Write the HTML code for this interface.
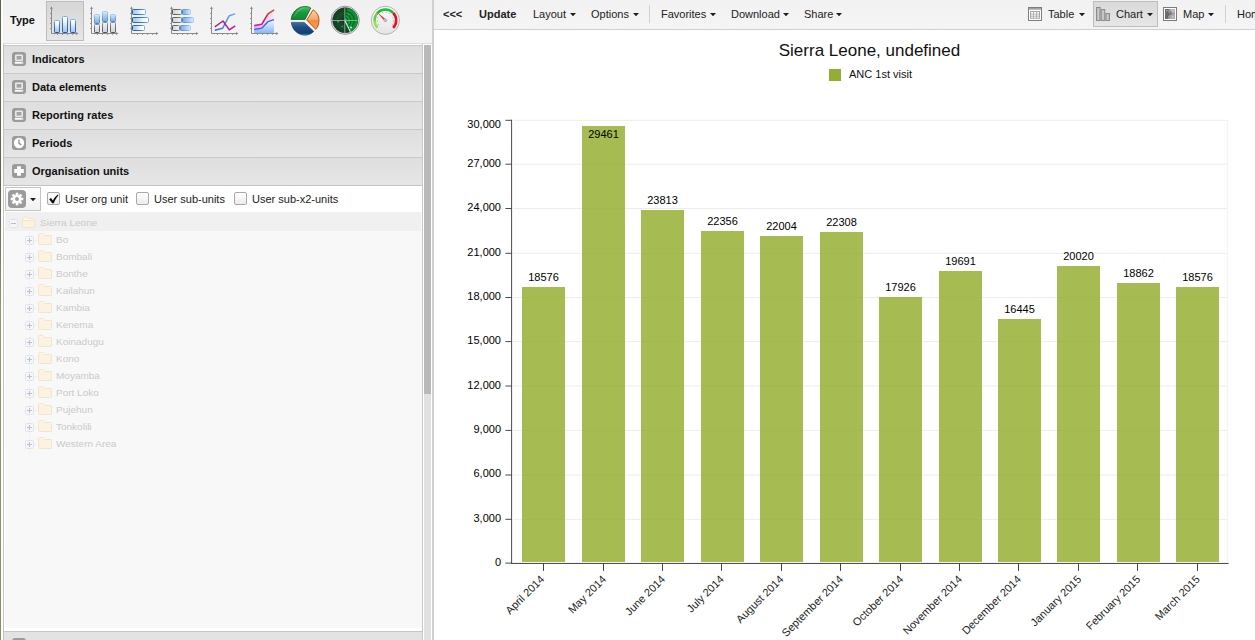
<!DOCTYPE html>
<html>
<head>
<meta charset="utf-8">
<title>DHIS 2 Data Visualizer</title>
<style>
html,body{margin:0;padding:0;}
body{width:1255px;height:640px;overflow:hidden;background:#fff;position:relative;font-family:"Liberation Sans",sans-serif;font-size:11px;color:#222;}
.abs{position:absolute;}
.t{position:absolute;white-space:nowrap;line-height:13px;font-size:11px;color:#222;}
.b{font-weight:bold;}
#edge{left:0;top:0;width:1px;height:640px;background:linear-gradient(#5e604c 0%,#626450 32%,#a09268 48%,#94885e 100%);}
#west{left:1px;top:0;width:431px;height:640px;background:#fff;}
#typebar{left:3px;top:0;width:429px;height:43px;background:linear-gradient(#f0f0f0,#f4f4f4);border-bottom:1px solid #dcdcdc;}
.tbtn{position:absolute;top:1px;width:36px;height:37.5px;border:1px solid transparent;}
.tbtn.sel{border-color:#bdbdbd;background:linear-gradient(#d6d6d6,#e6e6e6);}
.tbtn svg{position:absolute;left:2px;top:2px;}
#split{left:432px;top:0;width:2px;height:640px;background:#d0d0d0;}
#acc{left:3px;top:44px;width:420px;height:596px;background:#fff;border-left:1px solid #c4c4c4;border-right:1px solid #c9c9c9;box-sizing:border-box;}
.hd{position:absolute;left:4px;width:418px;height:27px;border-top:1px solid #c8c8c8;background:linear-gradient(#dedede,#e6e6e6);}
.hd svg{position:absolute;left:8px;top:6px;}
.hd .tx{position:absolute;left:28px;top:7px;font-weight:bold;font-size:11px;line-height:13px;color:#111;white-space:nowrap;}
#sb{left:424px;top:45px;width:7px;height:595px;background:#e1e1e1;}
#sbt{left:424px;top:45px;width:7px;height:349px;background:#b9b9b9;}
#orgbar{left:4px;top:186px;width:418px;height:26px;background:#fff;}
.cb{position:absolute;top:192px;width:11px;height:11px;border:1px solid #a9a9a9;border-radius:2px;background:linear-gradient(#fff,#ececec);}
.lb{position:absolute;font-size:10px;line-height:13px;color:#cacaca;white-space:nowrap;transform:scaleY(0.92);transform-origin:0 76%;}
#ebar{left:434px;top:0;width:821px;height:29px;background:linear-gradient(#f2f2f2,#f4f4f4);border-bottom:1px solid #d0d0d0;}
.arr{position:absolute;width:6px;height:3.4px;background:#1e1e1e;clip-path:polygon(0 0,100% 0,50% 100%);margin-top:-0.1px;}
.sep{position:absolute;width:1px;background:#d2d2d2;}
.bar{position:absolute;width:43px;background:rgba(144,170,39,0.8);}
.vl{position:absolute;font-size:11px;line-height:13px;width:43px;text-align:center;color:#000;}
.yl{position:absolute;font-size:11px;line-height:13px;width:60px;text-align:right;color:#000;left:441px;}
.gl{position:absolute;left:512px;width:716px;height:1px;background:#ececec;}
.tk{position:absolute;background:#444;}
.xl{position:absolute;font-size:11px;line-height:13px;white-space:nowrap;color:#222;transform-origin:100% 50%;transform:rotate(-45deg);text-align:right;}
</style>
</head>
<body>
<div class="abs" id="west"></div>
<div class="abs" id="edge"></div>
<div class="abs" id="typebar"></div>
<div class="t b" style="left:10px;top:14px;color:#111;">Type</div>
<svg width="0" height="0" style="position:absolute"><defs>
<linearGradient id="gb" x1="0" y1="0" x2="0" y2="1"><stop offset="0" stop-color="#ffffff"/><stop offset="0.3" stop-color="#f4f8fd"/><stop offset="0.65" stop-color="#c4daf2"/><stop offset="1" stop-color="#a4c4ea"/></linearGradient>
<linearGradient id="sb1" x1="0" y1="0" x2="0" y2="1"><stop offset="0" stop-color="#7fb2ec"/><stop offset="0.35" stop-color="#3f80cc"/><stop offset="1" stop-color="#1a56a2"/></linearGradient>
<linearGradient id="gbh" x1="0" y1="0" x2="1" y2="0"><stop offset="0" stop-color="#a4c4ea"/><stop offset="0.35" stop-color="#c4daf2"/><stop offset="0.7" stop-color="#f4f8fd"/><stop offset="1" stop-color="#ffffff"/></linearGradient>
<linearGradient id="sb1h" x1="0" y1="0" x2="1" y2="0"><stop offset="0" stop-color="#1a56a2"/><stop offset="0.65" stop-color="#3f80cc"/><stop offset="1" stop-color="#7fb2ec"/></linearGradient>
<linearGradient id="gb2" x1="0" y1="0" x2="0" y2="1"><stop offset="0" stop-color="#dbe8f8"/><stop offset="1" stop-color="#78aae6"/></linearGradient>
<linearGradient id="sb2" x1="0" y1="0" x2="0" y2="1"><stop offset="0" stop-color="#a4cdf8"/><stop offset="1" stop-color="#4486d6"/></linearGradient>
<linearGradient id="gb2h" x1="0" y1="0" x2="1" y2="0"><stop offset="0" stop-color="#78aae6"/><stop offset="1" stop-color="#dbe8f8"/></linearGradient>
<linearGradient id="sb2h" x1="0" y1="0" x2="1" y2="0"><stop offset="0" stop-color="#4486d6"/><stop offset="1" stop-color="#a4cdf8"/></linearGradient>
<linearGradient id="gg" x1="0" y1="0" x2="0" y2="1"><stop offset="0" stop-color="#f2f2f2"/><stop offset="1" stop-color="#d2d2d2"/></linearGradient>
<linearGradient id="sg" x1="0" y1="0" x2="0" y2="1"><stop offset="0" stop-color="#8a9096"/><stop offset="1" stop-color="#46525c"/></linearGradient>
<linearGradient id="ggh" x1="0" y1="0" x2="1" y2="0"><stop offset="0" stop-color="#d2d2d2"/><stop offset="1" stop-color="#f2f2f2"/></linearGradient>
<linearGradient id="sgh" x1="0" y1="0" x2="1" y2="0"><stop offset="0" stop-color="#46525c"/><stop offset="1" stop-color="#7a828a"/></linearGradient>
<linearGradient id="lb" x1="0" y1="0" x2="1" y2="0"><stop offset="0" stop-color="#2468e0"/><stop offset="1" stop-color="#74b6ff"/></linearGradient>
<linearGradient id="lm" x1="0" y1="0" x2="1" y2="0"><stop offset="0" stop-color="#c02068"/><stop offset="1" stop-color="#b0209a"/></linearGradient>
<linearGradient id="am" x1="0" y1="0" x2="1" y2="0"><stop offset="0" stop-color="#d820c0"/><stop offset="0.5" stop-color="#c02268"/><stop offset="1" stop-color="#c85a20"/></linearGradient>
<linearGradient id="ap" x1="0" y1="0" x2="1" y2="0"><stop offset="0" stop-color="#fba6ee"/><stop offset="1" stop-color="#fde6ee"/></linearGradient>
<linearGradient id="ab" x1="0" y1="0" x2="0" y2="1"><stop offset="0" stop-color="#f4f8ff"/><stop offset="1" stop-color="#86b8fa"/></linearGradient>
<linearGradient id="pg" x1="0" y1="0" x2="0" y2="1"><stop offset="0" stop-color="#4cc06a"/><stop offset="0.45" stop-color="#189a3c"/><stop offset="1" stop-color="#0c8a30"/></linearGradient>
<linearGradient id="po" x1="0" y1="0" x2="0" y2="1"><stop offset="0" stop-color="#fbd2b0"/><stop offset="0.5" stop-color="#f6a468"/><stop offset="0.52" stop-color="#f08a3c"/><stop offset="1" stop-color="#f6a24a"/></linearGradient>
<linearGradient id="pb" x1="0" y1="0" x2="0" y2="1"><stop offset="0" stop-color="#4a6c98"/><stop offset="0.4" stop-color="#1f4c82"/><stop offset="0.85" stop-color="#12406e"/><stop offset="1" stop-color="#2fb4d8"/></linearGradient>
<radialGradient id="rg" cx="0.5" cy="0.5" r="0.5"><stop offset="0" stop-color="#0a2a16"/><stop offset="0.55" stop-color="#1f4e30"/><stop offset="1" stop-color="#16381f"/></radialGradient>
<radialGradient id="rw" cx="0" cy="0" r="13" gradientUnits="userSpaceOnUse"><stop offset="0" stop-color="#0fa83c"/><stop offset="1" stop-color="#0a9a30"/></radialGradient>
<linearGradient id="gau" x1="0" y1="0" x2="0" y2="1"><stop offset="0" stop-color="#fdfdfd"/><stop offset="1" stop-color="#e4e4e4"/></linearGradient>
</defs></svg>
<div class="tbtn sel" style="left:46px"><svg width="32" height="32" viewBox="0 0 32 32"><path d="M2.5 3 V29.5 H28.5" fill="none" stroke="#8a8a8a" stroke-width="1"/><path d="M1.1 4.9 L2.5 2.3 L3.9 4.9 Z M26.9 28.1 L29.6 29.5 L26.9 30.9 Z" fill="#8a8a8a"/><path d="M1.2 9.5H2.5 M1.2 14.5H2.5 M1.2 19.5H2.5 M1.2 24.5H2.5 M8.5 29.5V30.8 M13.5 29.5V30.8 M18.5 29.5V30.8 M23.5 29.5V30.8" stroke="#8a8a8a" stroke-width="1"/><rect x="5.5" y="16.5" width="5" height="12" rx="0.8" fill="url(#gb)" stroke="url(#sb1)" stroke-width="1"/><rect x="13.5" y="12.5" width="5" height="16" rx="0.8" fill="url(#gb)" stroke="url(#sb1)" stroke-width="1"/><rect x="21.5" y="15.5" width="5" height="13" rx="0.8" fill="url(#gb)" stroke="url(#sb1)" stroke-width="1"/></svg></div>
<div class="tbtn" style="left:86px"><svg width="32" height="32" viewBox="0 0 32 32"><path d="M2.5 3 V29.5 H28.5" fill="none" stroke="#8a8a8a" stroke-width="1"/><path d="M1.1 4.9 L2.5 2.3 L3.9 4.9 Z M26.9 28.1 L29.6 29.5 L26.9 30.9 Z" fill="#8a8a8a"/><path d="M1.2 9.5H2.5 M1.2 14.5H2.5 M1.2 19.5H2.5 M1.2 24.5H2.5 M8.5 29.5V30.8 M13.5 29.5V30.8 M18.5 29.5V30.8 M23.5 29.5V30.8" stroke="#8a8a8a" stroke-width="1"/><rect x="5.5" y="20.5" width="5" height="8" rx="0.8" fill="url(#gg)" stroke="url(#sg)" stroke-width="1"/><rect x="5.5" y="10.5" width="5" height="9" rx="0.8" fill="url(#gb2)" stroke="url(#sb2)" stroke-width="1"/><rect x="13.5" y="18.5" width="5" height="10" rx="0.8" fill="url(#gg)" stroke="url(#sg)" stroke-width="1"/><rect x="13.5" y="7.5" width="5" height="10" rx="0.8" fill="url(#gb2)" stroke="url(#sb2)" stroke-width="1"/><rect x="21.5" y="18.5" width="5" height="10" rx="0.8" fill="url(#gg)" stroke="url(#sg)" stroke-width="1"/><rect x="21.5" y="10.5" width="5" height="7" rx="0.8" fill="url(#gb2)" stroke="url(#sb2)" stroke-width="1"/></svg></div>
<div class="tbtn" style="left:126px"><svg width="32" height="32" viewBox="0 0 32 32"><path d="M2.5 3 V29.5 H28.5" fill="none" stroke="#8a8a8a" stroke-width="1"/><path d="M1.1 4.9 L2.5 2.3 L3.9 4.9 Z M26.9 28.1 L29.6 29.5 L26.9 30.9 Z" fill="#8a8a8a"/><path d="M1.2 9.5H2.5 M1.2 14.5H2.5 M1.2 19.5H2.5 M1.2 24.5H2.5 M8.5 29.5V30.8 M13.5 29.5V30.8 M18.5 29.5V30.8 M23.5 29.5V30.8" stroke="#8a8a8a" stroke-width="1"/><rect x="3.5" y="5.5" width="13" height="5" rx="0.8" fill="url(#gbh)" stroke="url(#sb1h)" stroke-width="1"/><rect x="3.5" y="13.5" width="16" height="5" rx="0.8" fill="url(#gbh)" stroke="url(#sb1h)" stroke-width="1"/><rect x="3.5" y="21.5" width="12" height="5" rx="0.8" fill="url(#gbh)" stroke="url(#sb1h)" stroke-width="1"/></svg></div>
<div class="tbtn" style="left:166px"><svg width="32" height="32" viewBox="0 0 32 32"><path d="M2.5 3 V29.5 H28.5" fill="none" stroke="#8a8a8a" stroke-width="1"/><path d="M1.1 4.9 L2.5 2.3 L3.9 4.9 Z M26.9 28.1 L29.6 29.5 L26.9 30.9 Z" fill="#8a8a8a"/><path d="M1.2 9.5H2.5 M1.2 14.5H2.5 M1.2 19.5H2.5 M1.2 24.5H2.5 M8.5 29.5V30.8 M13.5 29.5V30.8 M18.5 29.5V30.8 M23.5 29.5V30.8" stroke="#8a8a8a" stroke-width="1"/><rect x="3.5" y="5.5" width="9" height="5" rx="0.8" fill="url(#ggh)" stroke="url(#sgh)" stroke-width="1"/><rect x="13.5" y="5.5" width="8" height="5" rx="0.8" fill="url(#gb2h)" stroke="url(#sb2h)" stroke-width="1"/><rect x="3.5" y="13.5" width="9" height="5" rx="0.8" fill="url(#ggh)" stroke="url(#sgh)" stroke-width="1"/><rect x="13.5" y="13.5" width="11" height="5" rx="0.8" fill="url(#gb2h)" stroke="url(#sb2h)" stroke-width="1"/><rect x="3.5" y="21.5" width="7" height="5" rx="0.8" fill="url(#ggh)" stroke="url(#sgh)" stroke-width="1"/><rect x="11.5" y="21.5" width="10" height="5" rx="0.8" fill="url(#gb2h)" stroke="url(#sb2h)" stroke-width="1"/></svg></div>
<div class="tbtn" style="left:206px"><svg width="32" height="32" viewBox="0 0 32 32"><path d="M2.5 3 V29.5 H28.5" fill="none" stroke="#8a8a8a" stroke-width="1"/><path d="M1.1 4.9 L2.5 2.3 L3.9 4.9 Z M26.9 28.1 L29.6 29.5 L26.9 30.9 Z" fill="#8a8a8a"/><path d="M1.2 9.5H2.5 M1.2 14.5H2.5 M1.2 19.5H2.5 M1.2 24.5H2.5 M8.5 29.5V30.8 M13.5 29.5V30.8 M18.5 29.5V30.8 M23.5 29.5V30.8" stroke="#8a8a8a" stroke-width="1"/><path d="M5.8 26.2 L13.7 24.2 L20.3 11.7 L26.2 9.8" fill="none" stroke="url(#lb)" stroke-width="1.5" stroke-linejoin="round"/><path d="M5.8 22.9 L14 17 L20.3 25.9 L26.2 21.9" fill="none" stroke="url(#lm)" stroke-width="1.5" stroke-linejoin="round"/></svg></div>
<div class="tbtn" style="left:246px"><svg width="32" height="32" viewBox="0 0 32 32"><path d="M5.2 25.5 L12.7 24.2 L19 17.7 L25 15.7 V29 H5.2 Z" fill="url(#ab)"/><path d="M5.2 21.6 L12.7 20.3 L19 9.8 L25 5.9 V15.7 L19 17.7 L12.7 24.2 L5.2 25.5 Z" fill="url(#ap)"/><path d="M5.2 25.5 L12.7 24.2 L19 17.7 L25 15.7" fill="none" stroke="#2a6ae0" stroke-width="1.3" stroke-linejoin="round"/><path d="M5.2 21.6 L12.7 20.3 L19 9.8 L25.2 5.8" fill="none" stroke="url(#am)" stroke-width="1.6" stroke-linejoin="round"/><path d="M2.5 3 V29.5 H28.5" fill="none" stroke="#8a8a8a" stroke-width="1"/><path d="M1.1 4.9 L2.5 2.3 L3.9 4.9 Z M26.9 28.1 L29.6 29.5 L26.9 30.9 Z" fill="#8a8a8a"/><path d="M1.2 9.5H2.5 M1.2 14.5H2.5 M1.2 19.5H2.5 M1.2 24.5H2.5 M8.5 29.5V30.8 M13.5 29.5V30.8 M18.5 29.5V30.8 M23.5 29.5V30.8" stroke="#8a8a8a" stroke-width="1"/></svg></div>
<div class="tbtn" style="left:286px"><svg width="32" height="32" viewBox="0 0 32 32"><path d="M2.2 15.5 C2.6 8.4 9 2.4 16 2.5 C18.5 2.5 20.6 3.1 21.8 4 L16 15.5 Z" fill="url(#pg)" stroke="#0a6424" stroke-width="0.8" stroke-linejoin="round"/><path d="M17.7 16 L24.2 5.8 C27.8 8 30 12 30 16 C30 20 28.8 23.4 26.7 25.3 Z" fill="url(#po)" stroke="#b84412" stroke-width="0.9" stroke-linejoin="round"/><path d="M2.3 18.4 H15.3 L24.8 27.4 C22 30 19 31.2 16 31.2 C8.6 31.2 3 25.4 2.3 18.4 Z" fill="url(#pb)" stroke="#123a66" stroke-width="0.6" stroke-linejoin="round"/><path d="M4.6 13.5 C6 8 10.6 3.6 16.4 3.2 C12 5 8 8.6 4.6 13.5 Z" fill="#fff" opacity="0.18"/></svg></div>
<div class="tbtn" style="left:326px"><svg width="32" height="32" viewBox="0 0 32 32"><circle cx="16.2" cy="16.3" r="14.1" fill="#fbfbfb" stroke="#8a8a8a" stroke-width="0.9"/><circle cx="16.2" cy="16.3" r="12.7" fill="url(#rg)" stroke="#3a4a3e" stroke-width="0.5"/><g transform="translate(15.8 16.5)"><path d="M0 0 L2.2 -12.6 A12.6 12.6 0 0 1 5.6 11.3 Z" fill="url(#rw)" opacity="0.9"/><circle r="9.4" fill="none" stroke="#0a4a20" stroke-width="1.1" opacity="0.75"/><circle r="6.3" fill="none" stroke="#0a4a20" stroke-width="1.1" opacity="0.75"/><circle r="3.3" fill="none" stroke="#0a4a20" stroke-width="1" opacity="0.75"/><path d="M0 -12.6V12.6M-12.6 0H12.6" stroke="#8fc89e" stroke-width="0.8"/><path d="M0 0 L5.6 11.2" stroke="#d8f4e0" stroke-width="1.1"/><circle r="0.9" fill="#f070e0"/><circle cx="6.2" cy="7" r="0.9" fill="#e8fff0"/><circle cx="-6.6" cy="1.2" r="0.6" fill="#8ae8e0"/><circle cx="-2.6" cy="5.8" r="0.6" fill="#5ad0c8"/><circle cx="4" cy="-6" r="0.6" fill="#5ad0a0"/></g></svg></div>
<div class="tbtn" style="left:366px"><svg width="32" height="32" viewBox="0 0 32 32"><circle cx="16.4" cy="16.35" r="14.1" fill="url(#gau)" stroke="#b4b4b4" stroke-width="1"/><path d="M8.50 23.72 A10.8 10.8 0 0 1 5.60 16.35" fill="none" stroke="#9be048" stroke-width="2.6"/><path d="M5.61 16.73 A10.8 10.8 0 0 1 8.90 8.58" fill="none" stroke="#5ad244" stroke-width="2.6"/><path d="M8.63 8.85 A10.8 10.8 0 0 1 24.17 8.85" fill="none" stroke="#14c236" stroke-width="2.6"/><path d="M24.17 8.85 A10.8 10.8 0 0 1 24.17 23.85" fill="none" stroke="#e4101e" stroke-width="2.6"/><path d="M9.99 20.05L8.95 20.65" stroke="#a8a8a8" stroke-width="0.9"/><path d="M9.03 16.99L7.83 17.10" stroke="#a8a8a8" stroke-width="0.9"/><path d="M9.45 13.82L8.32 13.41" stroke="#a8a8a8" stroke-width="0.9"/><path d="M13.87 9.40L13.46 8.27" stroke="#a8a8a8" stroke-width="0.9"/><path d="M17.04 8.98L17.15 7.78" stroke="#a8a8a8" stroke-width="0.9"/><path d="M20.10 9.94L20.70 8.90" stroke="#a8a8a8" stroke-width="0.9"/><path d="M23.35 13.82L24.48 13.41" stroke="#a8a8a8" stroke-width="0.9"/><path d="M23.77 16.99L24.97 17.10" stroke="#a8a8a8" stroke-width="0.9"/><path d="M22.81 20.05L23.85 20.65" stroke="#a8a8a8" stroke-width="0.9"/><path d="M7 7.2 L17 15.6 L15.6 17 Z" fill="#f23046"/><circle cx="16.4" cy="16.4" r="1.7" fill="#a4a4a4" stroke="#d0d0d0" stroke-width="0.6"/><circle cx="16.4" cy="16.4" r="0.7" fill="#d8d8d8"/></svg></div>
<div class="abs" id="acc"></div>
<div class="hd" style="top:45px"><svg width="14" height="14" viewBox="0 0 14 14"><rect width="14" height="14" rx="3" fill="#9b9b9b"/><rect x="3" y="2.6" width="8" height="6.4" rx="1" fill="#e9e9e9"/><rect x="4.6" y="4" width="4.8" height="3.6" fill="#a3a3a3"/><rect x="2.8" y="9.8" width="8.4" height="1.9" fill="#fff"/><rect x="9.5" y="10.3" width="1" height="0.9" fill="#a8a8a8"/></svg><div class="tx">Indicators</div></div>
<div class="hd" style="top:73px"><svg width="14" height="14" viewBox="0 0 14 14"><rect width="14" height="14" rx="3" fill="#9b9b9b"/><rect x="3" y="2.6" width="8" height="6.4" rx="1" fill="#e9e9e9"/><rect x="4.6" y="4" width="4.8" height="3.6" fill="#a3a3a3"/><rect x="2.8" y="9.8" width="8.4" height="1.9" fill="#fff"/><rect x="9.5" y="10.3" width="1" height="0.9" fill="#a8a8a8"/></svg><div class="tx">Data elements</div></div>
<div class="hd" style="top:101px"><svg width="14" height="14" viewBox="0 0 14 14"><rect width="14" height="14" rx="3" fill="#9b9b9b"/><rect x="3" y="2.6" width="8" height="6.4" rx="1" fill="#e9e9e9"/><rect x="4.6" y="4" width="4.8" height="3.6" fill="#a3a3a3"/><rect x="2.8" y="9.8" width="8.4" height="1.9" fill="#fff"/><rect x="9.5" y="10.3" width="1" height="0.9" fill="#a8a8a8"/></svg><div class="tx">Reporting rates</div></div>
<div class="hd" style="top:129px"><svg width="14" height="14" viewBox="0 0 14 14"><rect width="14" height="14" rx="3" fill="#9b9b9b"/><circle cx="7" cy="7" r="5.2" fill="#fff"/><path d="M7 3.4V7.3L9.3 8.9" fill="none" stroke="#909090" stroke-width="1.3"/></svg><div class="tx">Periods</div></div>
<div class="hd" style="top:157px"><svg width="14" height="14" viewBox="0 0 14 14"><rect width="14" height="14" rx="3" fill="#9b9b9b"/><path d="M5.1 2.2H8.9V5.1H11.8V8.9H8.9V11.8H5.1V8.9H2.2V5.1H5.1Z" fill="#fff"/></svg><div class="tx">Organisation units</div></div>
<div class="abs" style="left:4px;top:185px;width:418px;height:1px;background:#c3c3c3"></div>
<div class="abs" id="orgbar"></div>
<div class="abs" style="left:5px;top:187px;width:36px;height:24px;box-sizing:border-box;border:1px solid #c4c4c4;background:linear-gradient(#fcfcfc,#f2f2f2)"></div>
<div class="abs" style="left:8px;top:190px;width:18px;height:18px"><svg width="18" height="18" viewBox="0 0 18 18"><rect width="18" height="18" rx="4" fill="#9b9b9b"/><g transform="translate(9 9)" fill="#fff"><rect x="-1.3" y="-6.3" width="2.6" height="4" transform="rotate(0)"/><rect x="-1.3" y="-6.3" width="2.6" height="4" transform="rotate(45)"/><rect x="-1.3" y="-6.3" width="2.6" height="4" transform="rotate(90)"/><rect x="-1.3" y="-6.3" width="2.6" height="4" transform="rotate(135)"/><rect x="-1.3" y="-6.3" width="2.6" height="4" transform="rotate(180)"/><rect x="-1.3" y="-6.3" width="2.6" height="4" transform="rotate(225)"/><rect x="-1.3" y="-6.3" width="2.6" height="4" transform="rotate(270)"/><rect x="-1.3" y="-6.3" width="2.6" height="4" transform="rotate(315)"/><circle r="4.4"/><circle r="1.9" fill="#9b9b9b"/></g></svg></div>
<div class="arr" style="left:30px;top:198px"></div>
<div class="cb" style="left:47px"></div>
<svg class="abs" style="left:47px;top:192px" width="14" height="14" viewBox="0 0 14 14"><path d="M2.2 7.2 L3.9 5.9 L5.9 8.4 C7 6.2 8.6 4.2 10.8 2.4 L11.5 3.2 C9.4 5.6 7.9 8.2 6.8 11.2 L5.2 11.2 Z" fill="#0a0a0a"/></svg>
<div class="t" style="left:65px;top:193px">User org unit</div>
<div class="cb" style="left:136px"></div>
<div class="t" style="left:154px;top:193px">User sub-units</div>
<div class="cb" style="left:234px"></div>
<div class="t" style="left:252px;top:193px">User sub-x2-units</div>
<div class="abs" style="left:5px;top:212px;width:417px;height:416px;background:#f8f8f8"></div>
<div class="abs" style="left:5px;top:212px;width:416px;height:19px;background:#f0f0f0"></div>
<svg class="abs" style="left:9px;top:219px" width="9" height="9" viewBox="0 0 9 9"><rect x="0.5" y="0.5" width="8" height="8" rx="1" fill="#f5f6f9" stroke="#e0e4ea"/><path d="M2 4.5H7" stroke="#b9c1cd" stroke-width="1"/></svg>
<svg class="abs" style="left:21px;top:215px" width="16" height="14" viewBox="0 0 16 14"><path d="M2 11.5 V3 Q2 2 3 2 H6 L7.4 3.5 H13 Q14 3.5 14 4.5 V11.5 Z" fill="#fdf6e6" stroke="#f2e5c9" stroke-width="1"/><path d="M1 6.6 Q0.9 5.6 1.9 5.6 H12.4 Q13.4 5.6 13.5 6.6 L14 11.6 Q14.1 12.6 13.1 12.6 H2.4 Q1.4 12.6 1.4 11.6 Z" fill="#fcf2e0" stroke="#f2e5c9" stroke-width="1"/></svg>
<div class="lb" style="left:40px;top:216px">Sierra Leone</div>
<svg class="abs" style="left:0;top:0" width="60" height="460" viewBox="0 0 60 460"><path d="M29.5 232V236 M13.5 215V219" stroke="#e6e6e6" stroke-width="1" stroke-dasharray="1 2"/><path d="M29.5 245.5V253" stroke="#e8e8e8" stroke-width="1" stroke-dasharray="1 2"/><path d="M35 240.5H36" stroke="#e8e8e8" stroke-width="1"/><path d="M29.5 262.5V270" stroke="#e8e8e8" stroke-width="1" stroke-dasharray="1 2"/><path d="M35 257.5H36" stroke="#e8e8e8" stroke-width="1"/><path d="M29.5 279.5V287" stroke="#e8e8e8" stroke-width="1" stroke-dasharray="1 2"/><path d="M35 274.5H36" stroke="#e8e8e8" stroke-width="1"/><path d="M29.5 296.5V304" stroke="#e8e8e8" stroke-width="1" stroke-dasharray="1 2"/><path d="M35 291.5H36" stroke="#e8e8e8" stroke-width="1"/><path d="M29.5 313.5V321" stroke="#e8e8e8" stroke-width="1" stroke-dasharray="1 2"/><path d="M35 308.5H36" stroke="#e8e8e8" stroke-width="1"/><path d="M29.5 330.5V338" stroke="#e8e8e8" stroke-width="1" stroke-dasharray="1 2"/><path d="M35 325.5H36" stroke="#e8e8e8" stroke-width="1"/><path d="M29.5 347.5V355" stroke="#e8e8e8" stroke-width="1" stroke-dasharray="1 2"/><path d="M35 342.5H36" stroke="#e8e8e8" stroke-width="1"/><path d="M29.5 364.5V372" stroke="#e8e8e8" stroke-width="1" stroke-dasharray="1 2"/><path d="M35 359.5H36" stroke="#e8e8e8" stroke-width="1"/><path d="M29.5 381.5V389" stroke="#e8e8e8" stroke-width="1" stroke-dasharray="1 2"/><path d="M35 376.5H36" stroke="#e8e8e8" stroke-width="1"/><path d="M29.5 398.5V406" stroke="#e8e8e8" stroke-width="1" stroke-dasharray="1 2"/><path d="M35 393.5H36" stroke="#e8e8e8" stroke-width="1"/><path d="M29.5 415.5V423" stroke="#e8e8e8" stroke-width="1" stroke-dasharray="1 2"/><path d="M35 410.5H36" stroke="#e8e8e8" stroke-width="1"/><path d="M29.5 432.5V440" stroke="#e8e8e8" stroke-width="1" stroke-dasharray="1 2"/><path d="M35 427.5H36" stroke="#e8e8e8" stroke-width="1"/><path d="M29.5 449.5V457" stroke="#e8e8e8" stroke-width="1" stroke-dasharray="1 2"/><path d="M35 444.5H36" stroke="#e8e8e8" stroke-width="1"/></svg>
<svg class="abs" style="left:25px;top:236px" width="9" height="9" viewBox="0 0 9 9"><rect x="0.5" y="0.5" width="8" height="8" rx="1" fill="#f5f6f9" stroke="#e0e4ea"/><path d="M2 4.5H7" stroke="#b9c1cd" stroke-width="1"/><path d="M4.5 2V7" stroke="#b9c1cd" stroke-width="1"/></svg>
<svg class="abs" style="left:37px;top:232px" width="16" height="14" viewBox="0 0 16 14"><path d="M1.5 2.5 Q1.5 1.5 2.5 1.5 H6 L7.5 3.5 H13.5 Q14.5 3.5 14.5 4.5 V11.5 Q14.5 12.5 13.5 12.5 H2.5 Q1.5 12.5 1.5 11.5 Z" fill="#fcf2e0" stroke="#f2e5c9" stroke-width="1"/><path d="M2.8 2.9H5.6" stroke="#fffaf0" stroke-width="0.9"/></svg>
<div class="lb" style="left:56px;top:233px">Bo</div>
<svg class="abs" style="left:25px;top:253px" width="9" height="9" viewBox="0 0 9 9"><rect x="0.5" y="0.5" width="8" height="8" rx="1" fill="#f5f6f9" stroke="#e0e4ea"/><path d="M2 4.5H7" stroke="#b9c1cd" stroke-width="1"/><path d="M4.5 2V7" stroke="#b9c1cd" stroke-width="1"/></svg>
<svg class="abs" style="left:37px;top:249px" width="16" height="14" viewBox="0 0 16 14"><path d="M1.5 2.5 Q1.5 1.5 2.5 1.5 H6 L7.5 3.5 H13.5 Q14.5 3.5 14.5 4.5 V11.5 Q14.5 12.5 13.5 12.5 H2.5 Q1.5 12.5 1.5 11.5 Z" fill="#fcf2e0" stroke="#f2e5c9" stroke-width="1"/><path d="M2.8 2.9H5.6" stroke="#fffaf0" stroke-width="0.9"/></svg>
<div class="lb" style="left:56px;top:250px">Bombali</div>
<svg class="abs" style="left:25px;top:270px" width="9" height="9" viewBox="0 0 9 9"><rect x="0.5" y="0.5" width="8" height="8" rx="1" fill="#f5f6f9" stroke="#e0e4ea"/><path d="M2 4.5H7" stroke="#b9c1cd" stroke-width="1"/><path d="M4.5 2V7" stroke="#b9c1cd" stroke-width="1"/></svg>
<svg class="abs" style="left:37px;top:266px" width="16" height="14" viewBox="0 0 16 14"><path d="M1.5 2.5 Q1.5 1.5 2.5 1.5 H6 L7.5 3.5 H13.5 Q14.5 3.5 14.5 4.5 V11.5 Q14.5 12.5 13.5 12.5 H2.5 Q1.5 12.5 1.5 11.5 Z" fill="#fcf2e0" stroke="#f2e5c9" stroke-width="1"/><path d="M2.8 2.9H5.6" stroke="#fffaf0" stroke-width="0.9"/></svg>
<div class="lb" style="left:56px;top:267px">Bonthe</div>
<svg class="abs" style="left:25px;top:287px" width="9" height="9" viewBox="0 0 9 9"><rect x="0.5" y="0.5" width="8" height="8" rx="1" fill="#f5f6f9" stroke="#e0e4ea"/><path d="M2 4.5H7" stroke="#b9c1cd" stroke-width="1"/><path d="M4.5 2V7" stroke="#b9c1cd" stroke-width="1"/></svg>
<svg class="abs" style="left:37px;top:283px" width="16" height="14" viewBox="0 0 16 14"><path d="M1.5 2.5 Q1.5 1.5 2.5 1.5 H6 L7.5 3.5 H13.5 Q14.5 3.5 14.5 4.5 V11.5 Q14.5 12.5 13.5 12.5 H2.5 Q1.5 12.5 1.5 11.5 Z" fill="#fcf2e0" stroke="#f2e5c9" stroke-width="1"/><path d="M2.8 2.9H5.6" stroke="#fffaf0" stroke-width="0.9"/></svg>
<div class="lb" style="left:56px;top:284px">Kailahun</div>
<svg class="abs" style="left:25px;top:304px" width="9" height="9" viewBox="0 0 9 9"><rect x="0.5" y="0.5" width="8" height="8" rx="1" fill="#f5f6f9" stroke="#e0e4ea"/><path d="M2 4.5H7" stroke="#b9c1cd" stroke-width="1"/><path d="M4.5 2V7" stroke="#b9c1cd" stroke-width="1"/></svg>
<svg class="abs" style="left:37px;top:300px" width="16" height="14" viewBox="0 0 16 14"><path d="M1.5 2.5 Q1.5 1.5 2.5 1.5 H6 L7.5 3.5 H13.5 Q14.5 3.5 14.5 4.5 V11.5 Q14.5 12.5 13.5 12.5 H2.5 Q1.5 12.5 1.5 11.5 Z" fill="#fcf2e0" stroke="#f2e5c9" stroke-width="1"/><path d="M2.8 2.9H5.6" stroke="#fffaf0" stroke-width="0.9"/></svg>
<div class="lb" style="left:56px;top:301px">Kambia</div>
<svg class="abs" style="left:25px;top:321px" width="9" height="9" viewBox="0 0 9 9"><rect x="0.5" y="0.5" width="8" height="8" rx="1" fill="#f5f6f9" stroke="#e0e4ea"/><path d="M2 4.5H7" stroke="#b9c1cd" stroke-width="1"/><path d="M4.5 2V7" stroke="#b9c1cd" stroke-width="1"/></svg>
<svg class="abs" style="left:37px;top:317px" width="16" height="14" viewBox="0 0 16 14"><path d="M1.5 2.5 Q1.5 1.5 2.5 1.5 H6 L7.5 3.5 H13.5 Q14.5 3.5 14.5 4.5 V11.5 Q14.5 12.5 13.5 12.5 H2.5 Q1.5 12.5 1.5 11.5 Z" fill="#fcf2e0" stroke="#f2e5c9" stroke-width="1"/><path d="M2.8 2.9H5.6" stroke="#fffaf0" stroke-width="0.9"/></svg>
<div class="lb" style="left:56px;top:318px">Kenema</div>
<svg class="abs" style="left:25px;top:338px" width="9" height="9" viewBox="0 0 9 9"><rect x="0.5" y="0.5" width="8" height="8" rx="1" fill="#f5f6f9" stroke="#e0e4ea"/><path d="M2 4.5H7" stroke="#b9c1cd" stroke-width="1"/><path d="M4.5 2V7" stroke="#b9c1cd" stroke-width="1"/></svg>
<svg class="abs" style="left:37px;top:334px" width="16" height="14" viewBox="0 0 16 14"><path d="M1.5 2.5 Q1.5 1.5 2.5 1.5 H6 L7.5 3.5 H13.5 Q14.5 3.5 14.5 4.5 V11.5 Q14.5 12.5 13.5 12.5 H2.5 Q1.5 12.5 1.5 11.5 Z" fill="#fcf2e0" stroke="#f2e5c9" stroke-width="1"/><path d="M2.8 2.9H5.6" stroke="#fffaf0" stroke-width="0.9"/></svg>
<div class="lb" style="left:56px;top:335px">Koinadugu</div>
<svg class="abs" style="left:25px;top:355px" width="9" height="9" viewBox="0 0 9 9"><rect x="0.5" y="0.5" width="8" height="8" rx="1" fill="#f5f6f9" stroke="#e0e4ea"/><path d="M2 4.5H7" stroke="#b9c1cd" stroke-width="1"/><path d="M4.5 2V7" stroke="#b9c1cd" stroke-width="1"/></svg>
<svg class="abs" style="left:37px;top:351px" width="16" height="14" viewBox="0 0 16 14"><path d="M1.5 2.5 Q1.5 1.5 2.5 1.5 H6 L7.5 3.5 H13.5 Q14.5 3.5 14.5 4.5 V11.5 Q14.5 12.5 13.5 12.5 H2.5 Q1.5 12.5 1.5 11.5 Z" fill="#fcf2e0" stroke="#f2e5c9" stroke-width="1"/><path d="M2.8 2.9H5.6" stroke="#fffaf0" stroke-width="0.9"/></svg>
<div class="lb" style="left:56px;top:352px">Kono</div>
<svg class="abs" style="left:25px;top:372px" width="9" height="9" viewBox="0 0 9 9"><rect x="0.5" y="0.5" width="8" height="8" rx="1" fill="#f5f6f9" stroke="#e0e4ea"/><path d="M2 4.5H7" stroke="#b9c1cd" stroke-width="1"/><path d="M4.5 2V7" stroke="#b9c1cd" stroke-width="1"/></svg>
<svg class="abs" style="left:37px;top:368px" width="16" height="14" viewBox="0 0 16 14"><path d="M1.5 2.5 Q1.5 1.5 2.5 1.5 H6 L7.5 3.5 H13.5 Q14.5 3.5 14.5 4.5 V11.5 Q14.5 12.5 13.5 12.5 H2.5 Q1.5 12.5 1.5 11.5 Z" fill="#fcf2e0" stroke="#f2e5c9" stroke-width="1"/><path d="M2.8 2.9H5.6" stroke="#fffaf0" stroke-width="0.9"/></svg>
<div class="lb" style="left:56px;top:369px">Moyamba</div>
<svg class="abs" style="left:25px;top:389px" width="9" height="9" viewBox="0 0 9 9"><rect x="0.5" y="0.5" width="8" height="8" rx="1" fill="#f5f6f9" stroke="#e0e4ea"/><path d="M2 4.5H7" stroke="#b9c1cd" stroke-width="1"/><path d="M4.5 2V7" stroke="#b9c1cd" stroke-width="1"/></svg>
<svg class="abs" style="left:37px;top:385px" width="16" height="14" viewBox="0 0 16 14"><path d="M1.5 2.5 Q1.5 1.5 2.5 1.5 H6 L7.5 3.5 H13.5 Q14.5 3.5 14.5 4.5 V11.5 Q14.5 12.5 13.5 12.5 H2.5 Q1.5 12.5 1.5 11.5 Z" fill="#fcf2e0" stroke="#f2e5c9" stroke-width="1"/><path d="M2.8 2.9H5.6" stroke="#fffaf0" stroke-width="0.9"/></svg>
<div class="lb" style="left:56px;top:386px">Port Loko</div>
<svg class="abs" style="left:25px;top:406px" width="9" height="9" viewBox="0 0 9 9"><rect x="0.5" y="0.5" width="8" height="8" rx="1" fill="#f5f6f9" stroke="#e0e4ea"/><path d="M2 4.5H7" stroke="#b9c1cd" stroke-width="1"/><path d="M4.5 2V7" stroke="#b9c1cd" stroke-width="1"/></svg>
<svg class="abs" style="left:37px;top:402px" width="16" height="14" viewBox="0 0 16 14"><path d="M1.5 2.5 Q1.5 1.5 2.5 1.5 H6 L7.5 3.5 H13.5 Q14.5 3.5 14.5 4.5 V11.5 Q14.5 12.5 13.5 12.5 H2.5 Q1.5 12.5 1.5 11.5 Z" fill="#fcf2e0" stroke="#f2e5c9" stroke-width="1"/><path d="M2.8 2.9H5.6" stroke="#fffaf0" stroke-width="0.9"/></svg>
<div class="lb" style="left:56px;top:403px">Pujehun</div>
<svg class="abs" style="left:25px;top:423px" width="9" height="9" viewBox="0 0 9 9"><rect x="0.5" y="0.5" width="8" height="8" rx="1" fill="#f5f6f9" stroke="#e0e4ea"/><path d="M2 4.5H7" stroke="#b9c1cd" stroke-width="1"/><path d="M4.5 2V7" stroke="#b9c1cd" stroke-width="1"/></svg>
<svg class="abs" style="left:37px;top:419px" width="16" height="14" viewBox="0 0 16 14"><path d="M1.5 2.5 Q1.5 1.5 2.5 1.5 H6 L7.5 3.5 H13.5 Q14.5 3.5 14.5 4.5 V11.5 Q14.5 12.5 13.5 12.5 H2.5 Q1.5 12.5 1.5 11.5 Z" fill="#fcf2e0" stroke="#f2e5c9" stroke-width="1"/><path d="M2.8 2.9H5.6" stroke="#fffaf0" stroke-width="0.9"/></svg>
<div class="lb" style="left:56px;top:420px">Tonkolili</div>
<svg class="abs" style="left:25px;top:440px" width="9" height="9" viewBox="0 0 9 9"><rect x="0.5" y="0.5" width="8" height="8" rx="1" fill="#f5f6f9" stroke="#e0e4ea"/><path d="M2 4.5H7" stroke="#b9c1cd" stroke-width="1"/><path d="M4.5 2V7" stroke="#b9c1cd" stroke-width="1"/></svg>
<svg class="abs" style="left:37px;top:436px" width="16" height="14" viewBox="0 0 16 14"><path d="M1.5 2.5 Q1.5 1.5 2.5 1.5 H6 L7.5 3.5 H13.5 Q14.5 3.5 14.5 4.5 V11.5 Q14.5 12.5 13.5 12.5 H2.5 Q1.5 12.5 1.5 11.5 Z" fill="#fcf2e0" stroke="#f2e5c9" stroke-width="1"/><path d="M2.8 2.9H5.6" stroke="#fffaf0" stroke-width="0.9"/></svg>
<div class="lb" style="left:56px;top:437px">Western Area</div>
<div class="abs" style="left:4px;top:631px;width:418px;height:10px;border-top:1px solid #c6c6c6;background:#e3e3e3"></div>
<div class="abs" style="left:12px;top:638px;width:14px;height:3px;border-radius:3px 3px 0 0;background:#9b9b9b"></div>
<div class="abs" id="sb"></div><div class="abs" id="sbt"></div>
<div class="abs" id="split"></div>
<div class="abs" id="ebar"></div>
<div class="t b" style="left:443px;top:8px">&lt;&lt;&lt;</div>
<div class="t b" style="left:479px;top:8px">Update</div>
<div class="t" style="left:533px;top:8px">Layout</div>
<div class="arr" style="left:570px;top:13px"></div>
<div class="t" style="left:591px;top:8px">Options</div>
<div class="arr" style="left:633px;top:13px"></div>
<div class="sep" style="left:649px;top:5px;height:18px"></div>
<div class="t" style="left:661px;top:8px">Favorites</div>
<div class="arr" style="left:710px;top:13px"></div>
<div class="t" style="left:731px;top:8px">Download</div>
<div class="arr" style="left:783px;top:13px"></div>
<div class="t" style="left:804px;top:8px">Share</div>
<div class="arr" style="left:836px;top:13px"></div>
<div class="abs" style="left:1093px;top:1px;width:63px;height:24px;border:1px solid #bdbdbd;background:linear-gradient(#d9d9d9,#e6e6e6)"></div>
<svg class="abs" style="left:1028px;top:7px" width="14" height="14" viewBox="0 0 14 14"><rect x="0.5" y="0.5" width="13" height="13" fill="#fff" stroke="#7e7e7e"/><rect x="1" y="1" width="12" height="1.7" fill="#a2a2a2"/><rect x="2" y="4" width="10" height="7.8" fill="#a8a8a8"/><rect x="3.1" y="5" width="2.1" height="1.7" fill="#fff"/><rect x="3.1" y="7.5" width="2.1" height="1.2" fill="#fff"/><rect x="3.1" y="9.6" width="2.1" height="1.2" fill="#fff"/><rect x="5.95" y="5" width="2.1" height="1.7" fill="#fff"/><rect x="5.95" y="7.5" width="2.1" height="1.2" fill="#fff"/><rect x="5.95" y="9.6" width="2.1" height="1.2" fill="#fff"/><rect x="8.8" y="5" width="2.1" height="1.7" fill="#fff"/><rect x="8.8" y="7.5" width="2.1" height="1.2" fill="#fff"/><rect x="8.8" y="9.6" width="2.1" height="1.2" fill="#fff"/></svg>
<svg class="abs" style="left:1096px;top:7px" width="14" height="14" viewBox="0 0 14 14"><rect x="0.5" y="0.5" width="3.6" height="13" fill="#b8b8b8" stroke="#8c8c8c"/><rect x="5.2" y="2.5" width="3.6" height="11" fill="#b8b8b8" stroke="#8c8c8c"/><rect x="9.9" y="6.5" width="3.6" height="7" fill="#b8b8b8" stroke="#8c8c8c"/><path d="M2.3 1.5V13M7 3.5V13M11.7 7.5V13" stroke="#d6d6d6" stroke-width="0.9"/></svg>
<svg class="abs" style="left:1163px;top:7px" width="14" height="14" viewBox="0 0 14 14"><rect x="0.5" y="0.5" width="13" height="13" fill="#fdfdfd" stroke="#7c7c7c"/><rect x="2" y="2" width="10" height="10" fill="#9a9a9a"/><path d="M2 2 L6 2 L5 5 L7 7.5 L4.5 12 L2 12 Z" fill="#6a6a6a"/><path d="M7.5 2 L12 2 L12 5 L9.5 6.5 L8 4.5 Z" fill="#bdbdbd"/><path d="M8 8 L12 7 L12 12 L7 12 Z" fill="#b0b0b0"/><path d="M5 5 L8 4.5 L9.5 6.5 L8 8 L7 7.5 Z" fill="#7e7e7e"/><path d="M3 3.5 L4.5 3 L4 5 Z M9 9.5 L10.5 9 L10 11 Z M5.5 9 L6.5 8.5 L6 10.5Z" fill="#d0d0d0"/></svg>
<div class="t" style="left:1048px;top:8px">Table</div>
<div class="arr" style="left:1079px;top:13px"></div>
<div class="t" style="left:1116px;top:8px">Chart</div>
<div class="arr" style="left:1147px;top:13px"></div>
<div class="t" style="left:1183px;top:8px">Map</div>
<div class="arr" style="left:1208px;top:13px"></div>
<div class="sep" style="left:1225px;top:5px;height:18px"></div>
<div class="t" style="left:1237px;top:8px">Home</div>
<svg class="abs" style="left:0;top:0" width="1255" height="640" viewBox="0 0 1255 640"><path d="M513 519.3H1228" stroke="#ededed" stroke-width="1"/><path d="M513 475.0H1228" stroke="#ededed" stroke-width="1"/><path d="M513 430.4H1228" stroke="#ededed" stroke-width="1"/><path d="M513 386.0H1228" stroke="#ededed" stroke-width="1"/><path d="M513 341.6H1228" stroke="#ededed" stroke-width="1"/><path d="M513 297.5H1228" stroke="#ededed" stroke-width="1"/><path d="M513 253.3H1228" stroke="#ededed" stroke-width="1"/><path d="M513 208.5H1228" stroke="#ededed" stroke-width="1"/><path d="M513 164.2H1228" stroke="#ededed" stroke-width="1"/><path d="M513 120.3H1228" stroke="#ededed" stroke-width="1"/><path d="M1227.6 120V562" stroke="#f3f3f3" stroke-width="1"/></svg>
<div class="abs" style="left:459px;top:41px;width:821px;text-align:center;font-size:17px;line-height:20px;color:#111">Sierra Leone, undefined</div>
<div class="abs" style="left:829px;top:69px;width:12px;height:12px;background:#93ad36"></div>
<div class="t" style="left:849px;top:68px;color:#111">ANC 1st visit</div>
<div class="yl" style="top:556px">0</div>
<div class="yl" style="top:512px">3,000</div>
<div class="yl" style="top:467px">6,000</div>
<div class="yl" style="top:423px">9,000</div>
<div class="yl" style="top:379px">12,000</div>
<div class="yl" style="top:334px">15,000</div>
<div class="yl" style="top:290px">18,000</div>
<div class="yl" style="top:246px">21,000</div>
<div class="yl" style="top:201px">24,000</div>
<div class="yl" style="top:157px">27,000</div>
<div class="yl" style="top:118px">30,000</div>
<div class="bar" style="left:522px;top:287px;height:274.70000000000005px"></div>
<div class="vl" style="left:522px;top:271px">18576</div>
<div class="xl" style="right:712.3px;top:571px">April 2014</div>
<div class="bar" style="left:582px;top:126px;height:435.70000000000005px"></div>
<div class="vl" style="left:582px;top:128px">29461</div>
<div class="xl" style="right:650.8px;top:571px">May 2014</div>
<div class="bar" style="left:641px;top:210px;height:351.70000000000005px"></div>
<div class="vl" style="left:641px;top:194px">23813</div>
<div class="xl" style="right:591.8px;top:571px">June 2014</div>
<div class="bar" style="left:701px;top:231px;height:330.70000000000005px"></div>
<div class="vl" style="left:701px;top:215px">22356</div>
<div class="xl" style="right:532.8px;top:571px">July 2014</div>
<div class="bar" style="left:760px;top:236px;height:325.70000000000005px"></div>
<div class="vl" style="left:760px;top:220px">22004</div>
<div class="xl" style="right:472.8px;top:571px">August 2014</div>
<div class="bar" style="left:820px;top:232px;height:329.70000000000005px"></div>
<div class="vl" style="left:820px;top:216px">22308</div>
<div class="xl" style="right:413.8px;top:571px">September 2014</div>
<div class="bar" style="left:879px;top:297px;height:264.70000000000005px"></div>
<div class="vl" style="left:879px;top:281px">17926</div>
<div class="xl" style="right:353.8px;top:571px">October 2014</div>
<div class="bar" style="left:939px;top:271px;height:290.70000000000005px"></div>
<div class="vl" style="left:939px;top:255px">19691</div>
<div class="xl" style="right:294.8px;top:571px">November 2014</div>
<div class="bar" style="left:998px;top:319px;height:242.70000000000005px"></div>
<div class="vl" style="left:998px;top:303px">16445</div>
<div class="xl" style="right:235.8px;top:571px">December 2014</div>
<div class="bar" style="left:1057px;top:266px;height:295.70000000000005px"></div>
<div class="vl" style="left:1057px;top:250px">20020</div>
<div class="xl" style="right:175.8px;top:571px">January 2015</div>
<div class="bar" style="left:1117px;top:283px;height:278.70000000000005px"></div>
<div class="vl" style="left:1117px;top:267px">18862</div>
<div class="xl" style="right:116.8px;top:571px">February 2015</div>
<div class="bar" style="left:1176px;top:287px;height:274.70000000000005px"></div>
<div class="vl" style="left:1176px;top:271px">18576</div>
<div class="xl" style="right:56.8px;top:571px">March 2015</div>
<svg class="abs" style="left:0;top:0" width="1255" height="640" viewBox="0 0 1255 640"><path d="M543.5 563V570.9" stroke="#444" stroke-width="1"/><path d="M603.5 563V570.9" stroke="#444" stroke-width="1"/><path d="M662.5 563V570.9" stroke="#444" stroke-width="1"/><path d="M721.5 563V570.9" stroke="#444" stroke-width="1"/><path d="M781.5 563V570.9" stroke="#444" stroke-width="1"/><path d="M840.5 563V570.9" stroke="#444" stroke-width="1"/><path d="M900.5 563V570.9" stroke="#444" stroke-width="1"/><path d="M959.5 563V570.9" stroke="#444" stroke-width="1"/><path d="M1018.5 563V570.9" stroke="#444" stroke-width="1"/><path d="M1078.5 563V570.9" stroke="#444" stroke-width="1"/><path d="M1137.5 563V570.9" stroke="#444" stroke-width="1"/><path d="M1197.5 563V570.9" stroke="#444" stroke-width="1"/><path d="M505.4 563.1H512" stroke="#4a4a4a" stroke-width="1"/><path d="M505.4 519.3H512" stroke="#4a4a4a" stroke-width="1"/><path d="M505.4 475.0H512" stroke="#4a4a4a" stroke-width="1"/><path d="M505.4 430.4H512" stroke="#4a4a4a" stroke-width="1"/><path d="M505.4 386.0H512" stroke="#4a4a4a" stroke-width="1"/><path d="M505.4 341.6H512" stroke="#4a4a4a" stroke-width="1"/><path d="M505.4 297.5H512" stroke="#4a4a4a" stroke-width="1"/><path d="M505.4 253.3H512" stroke="#4a4a4a" stroke-width="1"/><path d="M505.4 208.5H512" stroke="#4a4a4a" stroke-width="1"/><path d="M505.4 164.2H512" stroke="#4a4a4a" stroke-width="1"/><path d="M505.4 120.3H512" stroke="#4a4a4a" stroke-width="1"/><path d="M511.6 119.8V563.6" stroke="#4a4a4a" stroke-width="1"/><path d="M511 563.45H1228.6" stroke="#444" stroke-width="1"/></svg>
</body>
</html>
